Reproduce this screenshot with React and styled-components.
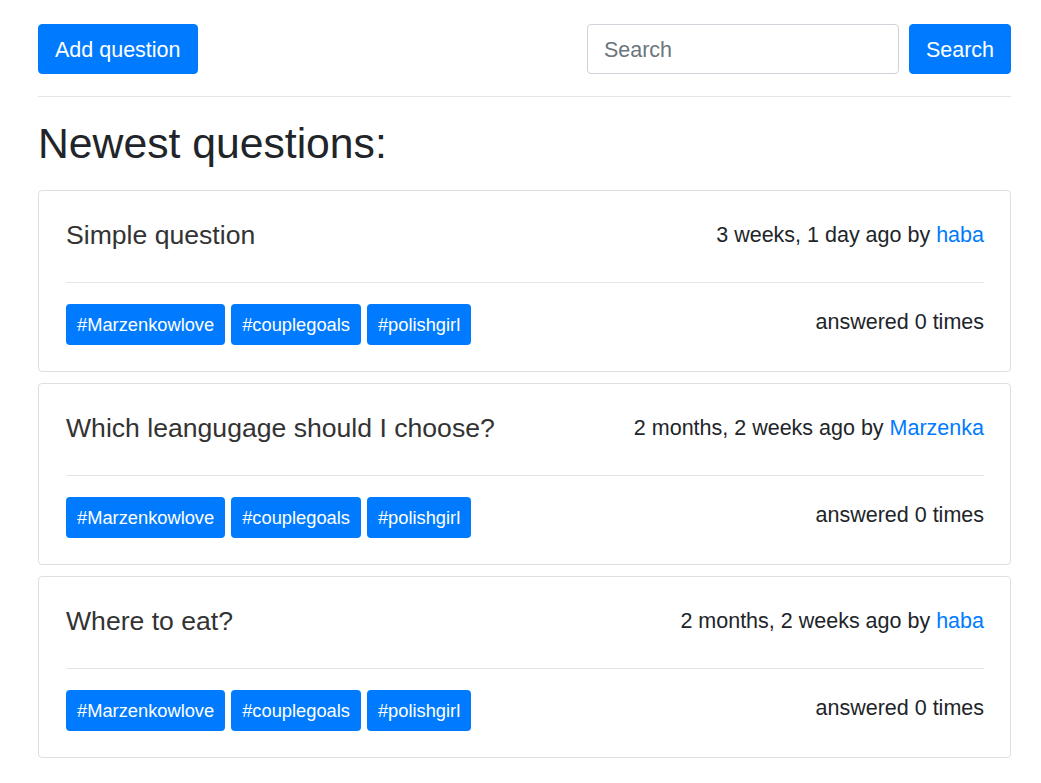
import React from 'react'
import styled, { createGlobalStyle } from 'styled-components'

const GlobalStyle = createGlobalStyle`
    body {
        margin: 0;
        font-family: "Liberation Sans", Arial, sans-serif;
        color: #212529;
        background: #fff;
    }
`

const questions = [
    { title: 'Simple question', when: '3 weeks, 1 day ago', author: 'haba', answers: 0 },
    { title: 'Which leangugage should I choose?', when: '2 months, 2 weeks ago', author: 'Marzenka', answers: 0 },
    { title: 'Where to eat?', when: '2 months, 2 weeks ago', author: 'haba', answers: 0 },
]

const tags = ['#Marzenkowlove', '#couplegoals', '#polishgirl']

const QuestionCard = ({ question }) => (
    <Card>
        <CardHead>
            <Title>{question.title}</Title>
            <Meta>{question.when} by <AuthorLink href="#">{question.author}</AuthorLink></Meta>
        </CardHead>
        <Divider />
        <CardFoot>
            <Tags>
                {tags.map(tag => <Tag key={tag}>{tag}</Tag>)}
            </Tags>
            <Answered>answered {question.answers} times</Answered>
        </CardFoot>
    </Card>
)

const App = () => {
    return (
        <Page>
            <GlobalStyle />
            <Toolbar>
                <PrimaryButton type="button">Add question</PrimaryButton>
                <SearchForm onSubmit={e => e.preventDefault()}>
                    <SearchInput type="text" placeholder="Search" />
                    <PrimaryButton type="submit">Search</PrimaryButton>
                </SearchForm>
            </Toolbar>
            <Rule />
            <Heading>Newest questions:</Heading>
            <List>
                {questions.map(q => <QuestionCard key={q.title} question={q} />)}
            </List>
        </Page>
    )
}

export default App

const Page = styled.div`
    padding: 24px 30px 24px 38px;
`

const Toolbar = styled.div`
    display: flex;
    justify-content: space-between;
    align-items: center;
`

const PrimaryButton = styled.button`
    font-family: inherit;
    font-size: 21.5px;
    line-height: 30px;
    padding: 10px 16px 8px;
    color: #fff;
    background: #007bff;
    border: 1px solid #007bff;
    border-radius: 4px;
    cursor: pointer;
`

const SearchForm = styled.form`
    display: flex;
    gap: 10px;
`

const SearchInput = styled.input`
    width: 312px;
    box-sizing: border-box;
    height: 50px;
    padding: 9px 16px 7px;
    font-family: inherit;
    font-size: 21.5px;
    color: #495057;
    border: 1px solid #ced4da;
    border-radius: 4px;
    outline: none;
    &::placeholder {
        color: #6c757d;
    }
`

const Rule = styled.hr`
    margin: 22px 0 0;
    border: 0;
    border-top: 1px solid rgba(0, 0, 0, 0.1);
`

const Heading = styled.h1`
    margin: 22px 0 23px;
    font-size: 42.7px;
    font-weight: 500;
    line-height: 48px;
`

const List = styled.div`
    display: flex;
    flex-direction: column;
    gap: 11px;
`

const Card = styled.div`
    border: 1px solid rgba(0, 0, 0, 0.125);
    border-radius: 4px;
    padding: 26px 26px 26px 27px;
`

const CardHead = styled.div`
    display: flex;
    justify-content: space-between;
    align-items: center;
`

const Title = styled.div`
    font-size: 26.6px;
    line-height: 36px;
    color: #333;
`

const Meta = styled.div`
    font-size: 21.5px;
    line-height: 30px;
`

const AuthorLink = styled.a`
    color: #007bff;
    text-decoration: none;
`

const Divider = styled.hr`
    margin: 29px 0 21px;
    border: 0;
    border-top: 1px solid rgba(0, 0, 0, 0.1);
`

const CardFoot = styled.div`
    display: flex;
    justify-content: space-between;
    align-items: flex-start;
`

const Tags = styled.div`
    display: flex;
    gap: 6px;
`

const Tag = styled.span`
    font-size: 18.3px;
    line-height: 27px;
    padding: 7px 11px;
    color: #fff;
    background: #007bff;
    border-radius: 4px;
`

const Answered = styled.div`
    font-size: 21.5px;
    line-height: 30px;
    margin-top: 3px;
`
